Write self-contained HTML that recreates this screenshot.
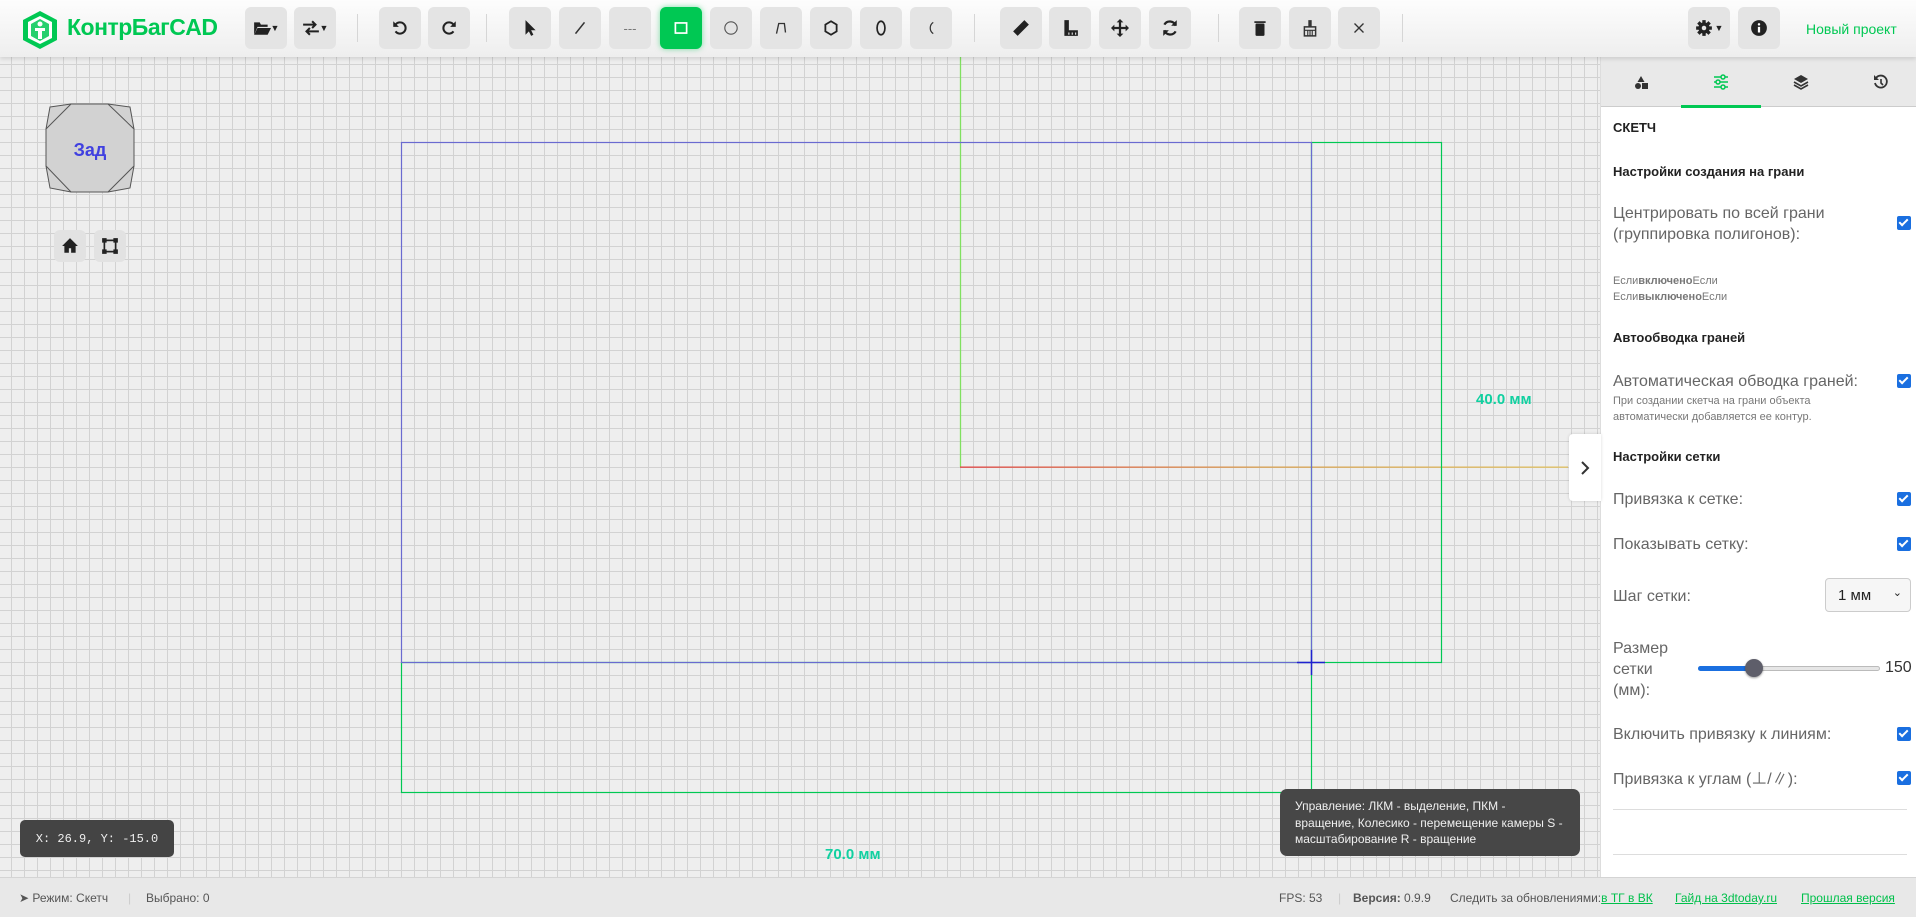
<!DOCTYPE html>
<html><head><meta charset="utf-8"><style>
*{box-sizing:border-box;margin:0;padding:0}
body{width:1916px;height:917px;overflow:hidden;font-family:"Liberation Sans","Noto Sans CJK SC",sans-serif;background:#eee;position:relative}
#grid{position:absolute;left:0;top:0;width:1600px;height:877px;background-color:#eeeeee;
background-image:linear-gradient(90deg,#d2d2d2 1px,transparent 1px),linear-gradient(#d2d2d2 1px,transparent 1px);
background-size:13px 13px;background-position:11px 12px}
#top{position:absolute;left:0;top:0;width:1916px;height:57px;background:linear-gradient(#fdfdfd,#eeeeee);box-shadow:0 2px 4px rgba(0,0,0,.12);z-index:5}
.b{position:absolute;top:7px;width:42px;height:42px;background:#e4e4e4;border-radius:6px;display:flex;align-items:center;justify-content:center;color:#222;font-size:16px}
.b svg{width:18px;height:18px}
.sep{position:absolute;top:14px;width:1px;height:28px;background:#d6d6d6}
#panel{position:absolute;left:1600px;top:57px;width:316px;height:820px;background:#fff;border-left:1px solid #ddd;z-index:3}
#tabs{height:50px;background:#e9e9e9;border-bottom:1px solid #ccc;position:relative}
.t{position:absolute;top:0;width:80px;height:50px;display:flex;align-items:center;justify-content:center}
.lab{position:absolute;left:12px;color:#666;font-size:16px;line-height:21px}
.h{position:absolute;left:12px;font-weight:bold;font-size:13px;color:#222}
.cb{position:absolute;left:296px;width:14px;height:14px;background:#1a6fe0;border-radius:2px}
.cb::after{content:"";position:absolute;left:4px;top:1px;width:3px;height:7px;border:solid #fff;border-width:0 2px 2px 0;transform:rotate(45deg)}
#status{position:absolute;left:0;top:877px;width:1916px;height:40px;background:#e8e8e8;border-top:1px solid #d4d4d4;font-size:12px;color:#555;z-index:4}
#status span{position:absolute;top:13px}
#status a{color:#00c04b;text-decoration:underline}
</style></head><body>
<div id="grid"></div>
<svg style="position:absolute;left:0;top:0" width="1600" height="877">
<defs><linearGradient id="rg" x1="960" x2="1568" y1="0" y2="0" gradientUnits="userSpaceOnUse"><stop offset="0" stop-color="#e04040"/><stop offset=".5" stop-color="#d8a050"/><stop offset="1" stop-color="#e0c060"/></linearGradient></defs>
<line x1="960.5" y1="57" x2="960.5" y2="467" stroke="#80e060" stroke-width="1.3"/>
<rect x="960" y="466.5" width="608" height="1.3" fill="url(#rg)"/>
<rect x="1311.5" y="142.5" width="130" height="520" fill="none" stroke="#00c853" stroke-width="1.2"/>
<rect x="401.5" y="662.5" width="910" height="130" fill="none" stroke="#00c853" stroke-width="1.2"/>
<rect x="401.5" y="142.5" width="910" height="520" fill="none" stroke="#6a6ad0" stroke-width="1.2"/>
<line x1="1297" y1="662.5" x2="1325" y2="662.5" stroke="#2020d0" stroke-width="1.5"/>
<line x1="1311.5" y1="650" x2="1311.5" y2="675" stroke="#2020d0" stroke-width="1.5"/>
</svg>
<div style="position:absolute;left:1476px;top:391px;color:#10d0a0;font-weight:bold;font-size:15px">40.0 мм</div>
<div style="position:absolute;left:825px;top:846px;color:#10d0a0;font-weight:bold;font-size:15px">70.0 мм</div>
<div style="position:absolute;left:1569px;top:434px;width:32px;height:67px;background:#fff;border-radius:4px 0 0 4px;box-shadow:0 0 3px rgba(0,0,0,.15);display:flex;align-items:center;justify-content:center;z-index:4"><svg width="10" height="16"><path d="M2 2l6 6-6 6" stroke="#333" stroke-width="2" fill="none"/></svg></div>
<!-- view cube -->
<svg style="position:absolute;left:45px;top:103px" width="90" height="90" viewBox="0 0 90 90">
<path d="M5 4L26 1L63 1L85 4L89 26L89 63L85 85L63 89L26 89L5 85L1 63L1 26Z" fill="#d2d2d2" stroke="#555" stroke-width="1"/>
<path d="M26 1L1 26M63 1L89 26M1 63L26 89M89 63L63 89" stroke="#555" stroke-width="1"/>
<text x="45" y="53" text-anchor="middle" font-family="Liberation Sans" font-weight="bold" font-size="18" fill="#4040e0">Зад</text>
</svg>
<div class="b" style="left:54px;top:230px;width:32px;height:32px;background:#e2e2e2"><svg viewBox="0 0 16 16" width="15" height="15"><path d="M8 1L1 8h2v6h4v-4h2v4h4V8h2z" fill="#222"/></svg></div>
<div class="b" style="left:94px;top:230px;width:32px;height:32px;background:#e2e2e2"><svg viewBox="0 0 16 16" width="14" height="14"><rect x="3" y="3" width="10" height="10" fill="none" stroke="#222" stroke-width="1.5"/><rect x="1" y="1" width="4" height="4" fill="#222"/><rect x="11" y="1" width="4" height="4" fill="#222"/><rect x="1" y="11" width="4" height="4" fill="#222"/><rect x="11" y="11" width="4" height="4" fill="#222"/></svg></div>
<div style="position:absolute;left:20px;top:820px;width:154px;height:37px;background:#444;border-radius:5px;color:#eee;font-family:'Liberation Mono',monospace;font-size:12px;display:flex;align-items:center;justify-content:center">X: 26.9, Y: -15.0</div>
<div style="position:absolute;left:1280px;top:789px;width:300px;height:67px;background:#474747;border-radius:7px;color:#f0f0f0;font-size:12px;line-height:16.5px;padding:9px 15px">Управление: ЛКМ - выделение, ПКМ - вращение, Колесико - перемещение камеры S - масштабирование R - вращение</div>

<div id="top">
<svg style="position:absolute;left:20px;top:9px" width="40" height="42" viewBox="0 0 40 42"><path d="M20 2L37 11V31L20 40L3 31V11Z" fill="#00c853"/><path d="M20 7L32 13V29L20 35L8 29V13Z" fill="#fff"/><path d="M20 10L29 15V27L20 32L11 27V15Z" fill="#00c853" opacity=".85"/><circle cx="20" cy="15" r="2.5" fill="#fff"/><path d="M15 19h10v3h-3v8h-4v-8h-3z" fill="#fff"/></svg>
<div style="position:absolute;left:67px;top:14px;color:#00c853;font-weight:bold;font-size:23px;letter-spacing:-.5px">КонтрБагCAD</div>
<div class="b" style="left:245px"><svg viewBox="0 0 16 16"><path d="M1 3h5l1 2h6v2H4l-3 7z" fill="#222"/><path d="M4 8h12l-3 6H1z" fill="#222"/></svg><span style="font-size:9px">▼</span></div>
<div class="b" style="left:294px;font-size:18px"><svg viewBox="0 0 16 16"><path d="M1 5h11M9 2l3 3-3 3M15 11H4M7 8l-3 3 3 3" fill="none" stroke="#222" stroke-width="1.8"/></svg><span style="font-size:9px">▼</span></div>
<div class="sep" style="left:357px"></div>
<div class="b" style="left:379px"><svg viewBox="0 0 16 16"><path d="M4 5a5 5 0 1 1 0 6" fill="none" stroke="#222" stroke-width="1.8"/><path d="M2 2v5h5z" fill="#222"/></svg></div>
<div class="b" style="left:428px"><svg viewBox="0 0 16 16"><path d="M12 5a5 5 0 1 0 0 6" fill="none" stroke="#222" stroke-width="1.8"/><path d="M14 2v5h-5z" fill="#222"/></svg></div>
<div class="sep" style="left:486px"></div>
<div class="b" style="left:509px"><svg viewBox="0 0 16 16"><path d="M4 1v13l3-3 2 4 2-1-2-4h4z" fill="#222"/></svg></div>
<div class="b" style="left:559px"><svg viewBox="0 0 16 16"><path d="M4 13L12 3" stroke="#333" stroke-width="1.3"/></svg></div>
<div class="b" style="left:609px;color:#777;font-size:13px">---</div>
<div class="b" style="left:660px;background:#00c853;box-shadow:0 0 6px rgba(0,200,83,.5)"><svg viewBox="0 0 16 16"><rect x="3" y="3.5" width="10" height="9" fill="none" stroke="#fff" stroke-width="1.5"/></svg></div>
<div class="b" style="left:710px"><svg viewBox="0 0 16 16"><circle cx="8" cy="8" r="5.5" fill="none" stroke="#555" stroke-width="1"/></svg></div>
<div class="b" style="left:760px"><svg viewBox="0 0 16 16"><path d="M4 13L6 4L11 4L12 12" fill="none" stroke="#333" stroke-width="1.2"/></svg></div>
<div class="b" style="left:810px"><svg viewBox="0 0 16 16"><path d="M8 2L13 5V11L8 14L3 11V5Z" fill="none" stroke="#222" stroke-width="1.6"/></svg></div>
<div class="b" style="left:860px"><svg viewBox="0 0 16 16"><ellipse cx="8" cy="8" rx="3.5" ry="6" fill="none" stroke="#222" stroke-width="1.5"/></svg></div>
<div class="b" style="left:910px"><svg viewBox="0 0 16 16"><path d="M10 3a6 6 0 0 0 0 10" fill="none" stroke="#333" stroke-width="1.1"/></svg></div>
<div class="sep" style="left:974px"></div>
<div class="b" style="left:1000px"><svg viewBox="0 0 16 16"><path d="M11 1l4 4-10 10-4-4z" fill="#222"/></svg></div>
<div class="b" style="left:1049px"><svg viewBox="0 0 16 16"><path d="M3 1h4v9h8v5H3z" fill="#222"/><path d="M7 12v2M10 12v2M13 12v2" stroke="#e4e4e4"/></svg></div>
<div class="b" style="left:1099px"><svg viewBox="0 0 16 16"><path d="M8 0l3 3H9v4h4V5l3 3-3 3V9H9v4h2l-3 3-3-3h2V9H3v2L0 8l3-3v2h4V3H5z" fill="#222"/></svg></div>
<div class="b" style="left:1149px"><svg viewBox="0 0 16 16"><path d="M13 6a5.5 5.5 0 0 0-10-1M3 10a5.5 5.5 0 0 0 10 1" fill="none" stroke="#222" stroke-width="2"/><path d="M14 1v5H9zM2 15v-5h5z" fill="#222"/></svg></div>
<div class="sep" style="left:1218px"></div>
<div class="b" style="left:1239px"><svg viewBox="0 0 16 16"><rect x="4" y="4" width="8" height="11" rx="1" fill="#222"/><rect x="3" y="2" width="10" height="1.5" fill="#222"/></svg></div>
<div class="b" style="left:1289px"><svg viewBox="0 0 16 16"><rect x="6.5" y="1" width="3" height="6" fill="#333"/><path d="M3 7h10v8H3z" fill="none" stroke="#333" stroke-width="1.3"/><path d="M3 10h10M6 10v5M8 10v5M10 10v5" stroke="#333"/></svg></div>
<div class="b" style="left:1338px"><svg viewBox="0 0 16 16"><path d="M4 4l8 8M12 4l-8 8" stroke="#333" stroke-width="1.2"/></svg></div>
<div class="sep" style="left:1402px"></div>
<div class="b" style="left:1688px"><svg viewBox="0 0 16 16"><circle cx="8" cy="8" r="5" fill="#222"/><path d="M8 1v14M1 8h14M3 3l10 10M13 3L3 13" stroke="#222" stroke-width="3"/><circle cx="8" cy="8" r="2" fill="#e4e4e4"/></svg><span style="font-size:9px;margin-left:2px">▼</span></div>
<div class="b" style="left:1738px"><svg viewBox="0 0 16 16"><circle cx="8" cy="8" r="7" fill="#222"/><rect x="7" y="7" width="2" height="5" fill="#fff"/><circle cx="8" cy="4.8" r="1.1" fill="#fff"/></svg></div>
<div style="position:absolute;left:1806px;top:21px;color:#00c853;font-size:14px">Новый проект</div>
</div>

<div id="panel">
<div id="tabs">
<div class="t" style="left:0"><svg width="16" height="16" viewBox="0 0 16 16"><path d="M8 2l3.5 6h-7z" fill="#333"/><circle cx="5" cy="12" r="3" fill="#333"/><rect x="9" y="9" width="6" height="6" fill="#333"/></svg></div>
<div class="t" style="left:80px"><svg width="16" height="16" viewBox="0 0 16 16"><path d="M1 3h14M1 8h14M1 13h14" stroke="#00c853" stroke-width="1.5"/><circle cx="10" cy="3" r="2" fill="#e9e9e9" stroke="#00c853" stroke-width="1.5"/><circle cx="5" cy="8" r="2" fill="#e9e9e9" stroke="#00c853" stroke-width="1.5"/><circle cx="10" cy="13" r="2" fill="#e9e9e9" stroke="#00c853" stroke-width="1.5"/></svg><div style="position:absolute;left:0;bottom:-1px;width:80px;height:3px;background:#00c853"></div></div>
<div class="t" style="left:160px"><svg width="16" height="16" viewBox="0 0 16 16"><path d="M8 1l7 4-7 4-7-4z" fill="#333"/><path d="M1 8l7 4 7-4M1 11l7 4 7-4" fill="none" stroke="#333" stroke-width="1.6"/></svg></div>
<div class="t" style="left:240px"><svg width="16" height="16" viewBox="0 0 16 16"><path d="M3 4a6 6 0 1 1-1 5" fill="none" stroke="#333" stroke-width="1.8"/><path d="M1 1v5h5z" fill="#333"/><path d="M8 5v4l2 2" stroke="#333" stroke-width="1.6" fill="none"/></svg></div>
</div>
<div class="h" style="top:63px">СКЕТЧ</div>
<div class="h" style="top:107px">Настройки создания на грани</div>
<div class="lab" style="top:146px">Центрировать по всей грани<br>(группировка полигонов):</div>
<div class="cb" style="top:159px"></div>
<div style="position:absolute;left:12px;top:216px;font-size:11px;line-height:16px;color:#777">Если<b>включено</b>Если<br>Если<b>выключено</b>Если</div>
<div class="h" style="top:273px">Автообводка граней</div>
<div class="lab" style="top:314px">Автоматическая обводка граней:</div>
<div class="cb" style="top:317px"></div>
<div style="position:absolute;left:12px;top:336px;font-size:11px;line-height:16px;color:#777">При создании скетча на грани объекта<br>автоматически добавляется ее контур.</div>
<div class="h" style="top:392px">Настройки сетки</div>
<div class="lab" style="top:432px">Привязка к сетке:</div>
<div class="cb" style="top:435px"></div>
<div class="lab" style="top:477px">Показывать сетку:</div>
<div class="cb" style="top:480px"></div>
<div class="lab" style="top:529px">Шаг сетки:</div>
<div style="position:absolute;left:224px;top:521px;width:86px;height:34px;border:1px solid #ccc;border-radius:4px;background:#f6f6f6;font-size:15px;color:#222;padding:8px 12px">1 мм<span style="position:absolute;right:8px;top:7px;font-size:11px">&#8964;</span></div>
<div class="lab" style="top:581px;line-height:21px">Размер<br>сетки<br>(мм):</div>
<div style="position:absolute;left:97px;top:609px;width:182px;height:5px;border-radius:3px;background:#e6e6e6;border:1px solid #bbb"></div>
<div style="position:absolute;left:97px;top:609px;width:56px;height:5px;border-radius:3px;background:#1a6fe0"></div>
<div style="position:absolute;left:144px;top:602px;width:18px;height:18px;border-radius:50%;background:#5e5e6a;box-shadow:0 1px 2px rgba(0,0,0,.4)"></div>
<div style="position:absolute;left:284px;top:602px;font-size:16px;color:#333">150</div>
<div class="lab" style="top:667px">Включить привязку к линиям:</div>
<div class="cb" style="top:670px"></div>
<div class="lab" style="top:712px">Привязка к углам (⊥/∥):</div>
<div class="cb" style="top:714px"></div>
<div style="position:absolute;left:12px;top:752px;width:294px;height:1px;background:#ddd"></div>
<div style="position:absolute;left:12px;top:797px;width:294px;height:1px;background:#ddd"></div>
</div>

<div id="status">
<span style="left:19px">➤ Режим: Скетч</span>
<span style="left:128px;color:#ccc">|</span>
<span style="left:146px">Выбрано: 0</span>
<span style="left:1279px">FPS: 53</span>
<span style="left:1338px;color:#ccc">|</span>
<span style="left:1353px"><b>Версия:</b> 0.9.9</span>
<span style="left:1450px">Следить за обновлениями:<a>в ТГ в ВК</a></span>
<span style="left:1675px"><a>Гайд на 3dtoday.ru</a></span>
<span style="left:1801px"><a>Прошлая версия</a></span>
</div>
</body></html>
